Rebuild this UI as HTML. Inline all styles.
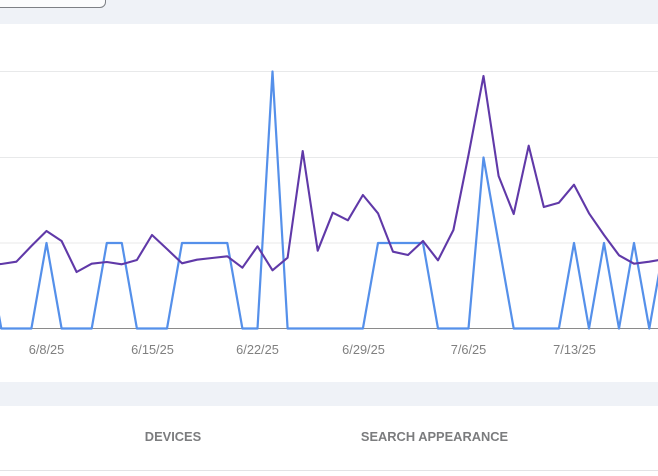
<!DOCTYPE html>
<html>
<head>
<meta charset="utf-8">
<style>
html,body{margin:0;padding:0;background:#fff;}
#p{position:relative;width:658px;height:476px;overflow:hidden;background:#fff;font-family:"Liberation Sans",sans-serif;}
.band{position:absolute;left:0;width:658px;background:#eff2f7;}
.btn{position:absolute;left:-20px;top:-20px;width:124px;height:26px;border:1px solid #7d8085;border-radius:6px;background:#fbfcfd;}
.d{position:absolute;top:343px;font-size:12.8px;line-height:14px;color:#808080;transform:translateX(-50%);white-space:nowrap;}
.t{position:absolute;top:429px;font-size:12.85px;line-height:16px;font-weight:bold;color:#7b7c7e;white-space:nowrap;transform:translateX(-50%);}
svg{position:absolute;left:0;top:0;}
</style>
</head>
<body>
<div id="p">
<div class="band" style="top:0;height:24px;"></div>
<div class="btn"></div>
<div class="band" style="top:382px;height:24px;"></div>
<svg width="658" height="476" viewBox="0 0 658 476" fill="none">
<path d="M0 71.5H658M0 157.5H658M0 243H658" stroke="#e8e9ea" stroke-width="1"/>
<path d="M0 328.5H658" stroke="#8a8a8a" stroke-width="1"/>
<path d="M0 470.5H658" stroke="#e2e3e5" stroke-width="1"/>
<polyline stroke="#5590ea" stroke-width="2.2" stroke-linejoin="round" points="-14,243 1.3,328.5 16.4,328.5 31.4,328.5 46.5,243 61.6,328.5 76.6,328.5 91.7,328.5 106.8,243 121.8,243 136.9,328.5 152,328.5 167,328.5 182,243 197,243 212,243 227.3,243 242.4,328.5 257.5,328.5 272.5,71.5 287.6,328.5 302.7,328.5 317.7,328.5 332.8,328.5 347.9,328.5 362.9,328.5 378,243 393,243 408,243 423,243 438,328.5 453.4,328.5 468.5,328.5 483.5,157.5 498.6,243 513.7,328.5 528.7,328.5 543.8,328.5 558.9,328.5 574,243 589,328.5 604,243 619,328.5 634,243 649.3,328.5 664.4,243"/>
<polyline stroke="#6039a8" stroke-width="2.1" stroke-linejoin="round" points="-14,265 1.3,264 16.4,261.7 31.4,246 46.5,231 61.6,241 76.6,272 91.7,263.7 106.8,262 121.8,264.3 136.9,260 152,235 167,249 182,263.3 197,259.7 212,258 227.3,256.3 242.4,267.7 257.5,246.3 272.5,270.3 287.6,257.7 302.7,151 317.7,250.7 332.8,212.7 347.9,220.3 362.9,195 378,213.3 393,251.7 408,255 423,241 438,260.3 453.4,230 468.5,155 483.5,76 498.6,176 513.7,214 528.7,145.7 543.8,207 558.9,202.7 574,184.7 589,213.3 604,235 619,255.3 634,263.7 649.3,261.7 664.4,259"/>
</svg>
<div class="d" style="left:46.5px;">6/8/25</div>
<div class="d" style="left:152.5px;">6/15/25</div>
<div class="d" style="left:257.5px;">6/22/25</div>
<div class="d" style="left:363.5px;">6/29/25</div>
<div class="d" style="left:468.5px;">7/6/25</div>
<div class="d" style="left:574.5px;">7/13/25</div>
<div class="t" style="left:173px;">DEVICES</div>
<div class="t" style="left:434.5px;">SEARCH APPEARANCE</div>
</div>
</body>
</html>
